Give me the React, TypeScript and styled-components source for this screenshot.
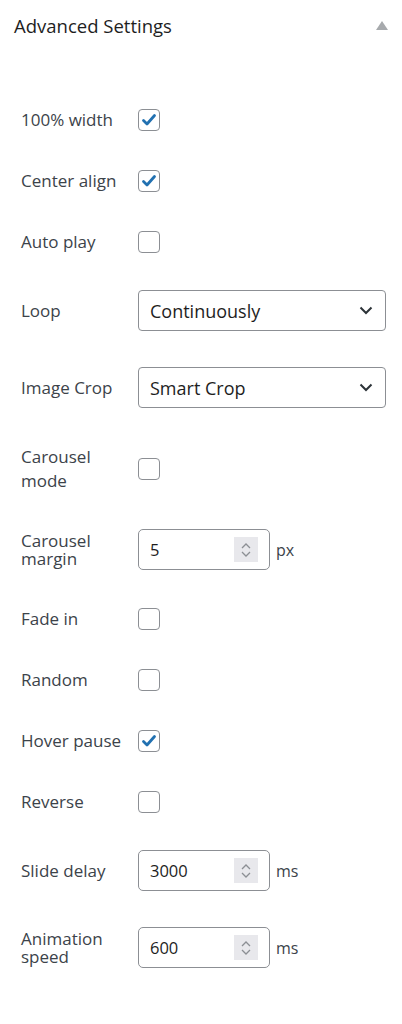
import { createGlobalStyle } from 'styled-components';
import styled from 'styled-components';

const GlobalStyle = createGlobalStyle`
  body {
    margin: 0;
    background: #fff;
    font-family: "Open Sans", "Noto Sans", sans-serif;
    color: #3c434a;
  }
`;

const Panel = styled.div`
  width: 402px;
  background: #fff;
`;

const Header = styled.div`
  height: 50px;
  display: flex;
  align-items: center;
  justify-content: space-between;
  padding: 0 14px;
`;

const Title = styled.h2`
  margin: 0;
  font-size: 18.5px;
  font-weight: 400;
  color: #1e1e1e;
`;

const Caret = styled.span`
  width: 0;
  height: 0;
  border-left: 6px solid transparent;
  border-right: 6px solid transparent;
  border-bottom: 9px solid #a7aaad;
`;

const Body = styled.div`
  padding: 39px 16px 40px 21px;
`;

const Row = styled.div<{ $pad: number }>`
  display: flex;
  align-items: center;
  padding: ${(p) => p.$pad}px 0;
`;

const Label = styled.label<{ $lh?: number }>`
  width: 117px;
  box-sizing: border-box;
  padding-right: 8px;
  flex-shrink: 0;
  font-size: 17px;
  line-height: ${(p) => p.$lh ?? 24}px;
  color: #3c434a;
`;

const Box = styled.span`
  width: 22px;
  height: 22px;
  box-sizing: border-box;
  border: 1px solid #8c8f94;
  border-radius: 4px;
  display: flex;
  align-items: center;
  justify-content: center;
  background: #fff;
`;

const Select = styled.div`
  width: 248px;
  height: 41px;
  box-sizing: border-box;
  border: 1px solid #8c8f94;
  border-radius: 4px;
  display: flex;
  align-items: center;
  justify-content: space-between;
  padding: 0 12px 0 11px;
  font-size: 18px;
  color: #1e1e1e;
`;

const NumberBox = styled.div`
  width: 132px;
  height: 41px;
  box-sizing: border-box;
  border: 1px solid #8c8f94;
  border-radius: 5px;
  display: flex;
  align-items: center;
  justify-content: space-between;
  padding: 0 11px 0 11px;
  font-size: 16.5px;
  color: #1e1e1e;
`;

const Spin = styled.span`
  width: 24px;
  height: 25px;
  background: #e8e8ec;
  display: flex;
  align-items: center;
  justify-content: center;
`;

const Unit = styled.span`
  margin-left: 6px;
  font-size: 16px;
  color: #3c434a;
`;

const Check = ({ on }: { on?: boolean }) => (
  <Box>
    {on && (
      <svg width="16" height="16" viewBox="0 0 16 16">
        <path d="M2.5 8.5 L6 12 L13.5 3.5" fill="none" stroke="#2271b1" strokeWidth="2.8" strokeLinecap="round" strokeLinejoin="round" />
      </svg>
    )}
  </Box>
);

const Chevron = () => (
  <svg width="14" height="9" viewBox="0 0 14 9">
    <path d="M1.5 1.5 L7 7 L12.5 1.5" fill="none" stroke="#2c3338" strokeWidth="2" />
  </svg>
);

const Spinner = () => (
  <Spin>
    <svg width="12" height="18" viewBox="0 0 12 18">
      <path d="M2 7 L6 3 L10 7 M2 11 L6 15 L10 11" fill="none" stroke="#8c8f94" strokeWidth="1.3" />
    </svg>
  </Spin>
);

type Item =
  | { kind: 'check'; label: string; on?: boolean; lh?: number }
  | { kind: 'select'; label: string; value: string }
  | { kind: 'number'; label: string; value: string; unit: string; lh?: number };

const items: Item[] = [
  { kind: 'check', label: '100% width', on: true },
  { kind: 'check', label: 'Center align', on: true },
  { kind: 'check', label: 'Auto play' },
  { kind: 'select', label: 'Loop', value: 'Continuously' },
  { kind: 'select', label: 'Image Crop', value: 'Smart Crop' },
  { kind: 'check', label: 'Carousel mode', lh: 24 },
  { kind: 'number', label: 'Carousel margin', value: '5', unit: 'px', lh: 18 },
  { kind: 'check', label: 'Fade in' },
  { kind: 'check', label: 'Random' },
  { kind: 'check', label: 'Hover pause', on: true },
  { kind: 'check', label: 'Reverse' },
  { kind: 'number', label: 'Slide delay', value: '3000', unit: 'ms' },
  { kind: 'number', label: 'Animation speed', value: '600', unit: 'ms', lh: 18 },
];

export default function App() {
  return (
    <Panel>
      <GlobalStyle />
      <Header>
        <Title>Advanced Settings</Title>
        <Caret />
      </Header>
      <Body>
        {items.map((it) => (
          <Row key={it.label} $pad={it.kind === 'check' ? 18.5 : 18}>
            <Label $lh={it.kind !== 'select' ? it.lh : undefined}>{it.label}</Label>
            {it.kind === 'check' && <Check on={it.on} />}
            {it.kind === 'select' && (
              <Select>
                <span>{it.value}</span>
                <Chevron />
              </Select>
            )}
            {it.kind === 'number' && (
              <>
                <NumberBox>
                  <span>{it.value}</span>
                  <Spinner />
                </NumberBox>
                <Unit>{it.unit}</Unit>
              </>
            )}
          </Row>
        ))}
      </Body>
    </Panel>
  );
}
